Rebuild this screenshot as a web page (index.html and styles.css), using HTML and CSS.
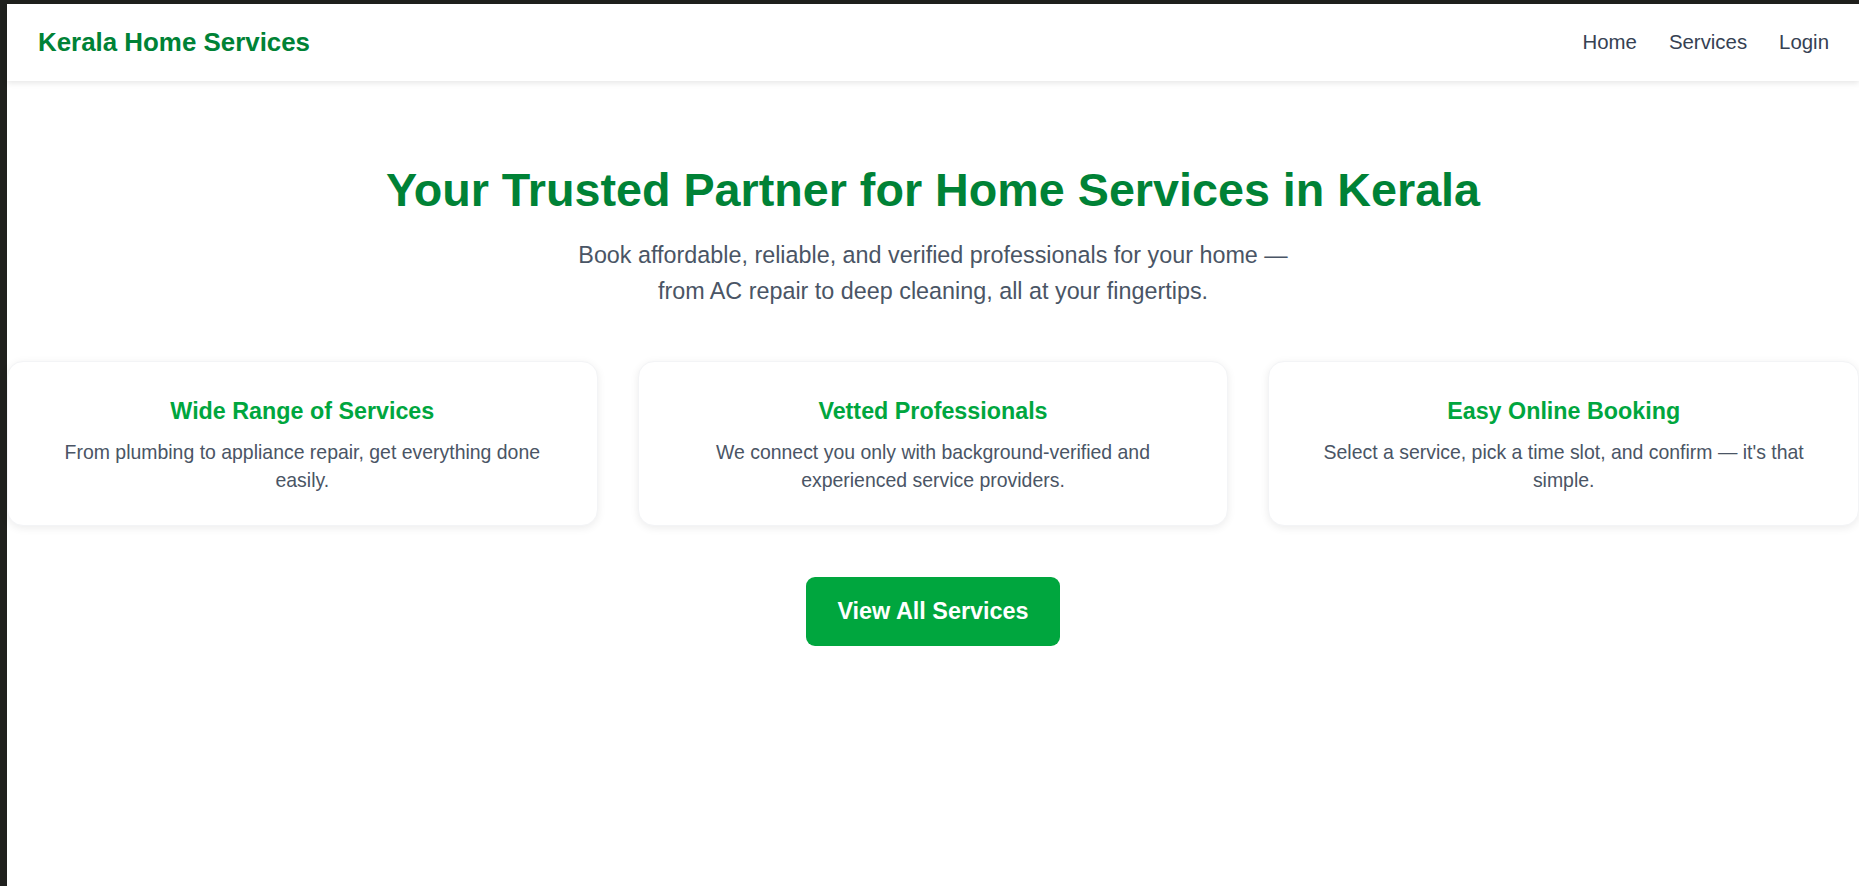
FILE: index.html
```html
<!DOCTYPE html>
<html lang="en">
<head>
<meta charset="utf-8">
<title>Kerala Home Services</title>
<link rel="stylesheet" href="styles.css">
</head>
<body>
<div class="frame">
  <div class="page">
    <header class="navbar">
      <a class="logo" href="#">Kerala Home Services</a>
      <nav class="nav-links">
        <a href="#">Home</a>
        <a href="#">Services</a>
        <a href="#">Login</a>
      </nav>
    </header>
    <main class="hero">
      <h1 class="hero-title">Your Trusted Partner for Home Services in Kerala</h1>
      <p class="hero-sub">Book affordable, reliable, and verified professionals for your home — from AC repair to deep cleaning, all at your fingertips.</p>
      <section class="features">
        <div class="card">
          <h3 class="card-title">Wide Range of Services</h3>
          <p class="card-text">From plumbing to appliance repair, get everything done easily.</p>
        </div>
        <div class="card">
          <h3 class="card-title">Vetted Professionals</h3>
          <p class="card-text">We connect you only with background-verified and experienced service providers.</p>
        </div>
        <div class="card">
          <h3 class="card-title">Easy Online Booking</h3>
          <p class="card-text">Select a service, pick a time slot, and confirm — it's that simple.</p>
        </div>
      </section>
      <a class="btn" href="#">View All Services</a>
    </main>
  </div>
</div>
</body>
</html>
```

FILE: styles.css
```css
* { box-sizing: border-box; }

html, body {
  margin: 0;
  padding: 0;
  height: 100%;
}

body {
  font-family: "Liberation Sans", Arial, sans-serif;
  background: #1f201d;
  overflow: hidden;
}

.frame {
  display: flex;
  flex-direction: column;
  height: 886px;
  padding: 4px 0 0 7px;
  background: #1f201d;
}

.page {
  flex: 1;
  background: #ffffff;
  display: flex;
  flex-direction: column;
}

.navbar {
  height: 77px;
  padding: 0 30px 0 31px;
  display: flex;
  align-items: center;
  justify-content: space-between;
  background: #ffffff;
  box-shadow: 0 2px 6px rgba(0, 0, 0, 0.1);
  position: relative;
  z-index: 1;
}

.logo {
  font-size: 25.9px;
  font-weight: bold;
  color: #008236;
  text-decoration: none;
}

.nav-links {
  display: flex;
  gap: 32px;
}

.nav-links a {
  font-size: 20.4px;
  color: #364153;
  text-decoration: none;
}

.hero {
  padding-top: 83px;
  text-align: center;
  display: flex;
  flex-direction: column;
  align-items: center;
}

.hero-title {
  margin: 0;
  font-size: 46.7px;
  line-height: 1.15;
  font-weight: bold;
  color: #008236;
}

.hero-sub {
  margin: 19px 0 0;
  max-width: 730px;
  font-size: 23.35px;
  line-height: 36.5px;
  color: #4a5565;
}

.features {
  align-self: stretch;
  margin-top: 51px;
  display: grid;
  grid-template-columns: repeat(3, 1fr);
  gap: 40px;
}

.card {
  background: #ffffff;
  border-radius: 16px;
  padding: 35px 32px 31px;
  box-shadow: 0 2px 8px rgba(0, 0, 0, 0.08);
  border: 1px solid #f3f4f6;
}

.card-title {
  margin: 0 0 13px;
  font-size: 23.3px;
  line-height: 28px;
  font-weight: bold;
  color: #00a63e;
}

.card-text {
  margin: 0;
  font-size: 19.45px;
  line-height: 28px;
  color: #4a5565;
}

.btn {
  margin-top: 51px;
  display: inline-block;
  padding: 20.5px 31px;
  font-size: 23.4px;
  line-height: 28px;
  font-weight: bold;
  color: #ffffff;
  background: #00a63e;
  border-radius: 9px;
  text-decoration: none;
}
```
